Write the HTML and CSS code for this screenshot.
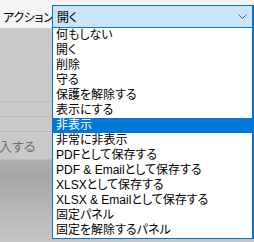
FILE: index.html
```html
<!DOCTYPE html>
<html lang="ja">
<head>
    <meta charset="UTF-8">
    <meta name="viewport" content="width=device-width, initial-scale=1.0">
    <title>アクション</title>
    <link rel="stylesheet" href="styles.css">
</head>
<body>
    <div class="form-row">
        <label class="field-label">アクション</label>
        <div class="select-wrap">
            <div class="select">
                <span>開く</span>
                <svg class="chevron" width="9" height="5" viewBox="0 0 9 5">
                    <polyline points="0.5,0.5 4.5,4.5 8.5,0.5" fill="none" stroke="#5f5f5f" stroke-width="1"/>
                </svg>
            </div>
            <ul class="options">
                <li>何もしない</li>
                <li>開く</li>
                <li>削除</li>
                <li>守る</li>
                <li>保護を解除する</li>
                <li>表示にする</li>
                <li class="active">非表示</li>
                <li>非常に非表示</li>
                <li>PDFとして保存する</li>
                <li>PDF &amp; Emailとして保存する</li>
                <li>XLSXとして保存する</li>
                <li>XLSX &amp; Emailとして保存する</li>
                <li>固定パネル</li>
                <li>固定を解除するパネル</li>
            </ul>
        </div>
    </div>

    <div class="panel">
        <div class="panel-row first"></div>
        <div class="panel-row short"></div>
        <div class="panel-row short"></div>
        <div class="panel-row input-row"><span class="hint">入する</span></div>
        <div class="panel-foot"></div>
    </div>
</body>
</html>
```

FILE: styles.css
```css
body {
    margin: 0;
    width: 254px;
    height: 242px;
    overflow: hidden;
    font-family: "Noto Sans CJK JP", "Noto Sans", sans-serif;
    font-feature-settings: "palt";
    font-size: 12px;
    color: #000;
    background-color: #c9c9c9;
}
.form-row {
    display: flex;
    align-items: flex-start;
    height: 28px;
    padding-top: 5px;
    box-sizing: border-box;
    background-color: #f4f4f4;
}
.field-label {
    width: 52px;
    padding-left: 3px;
    box-sizing: border-box;
    line-height: 23px;
    font-size: 12px;
    letter-spacing: -0.3px;
    white-space: nowrap;
}
.select-wrap {
    position: relative;
    width: 202px;
}
.select {
    display: flex;
    justify-content: space-between;
    align-items: center;
    height: 23px;
    box-sizing: border-box;
    padding: 0 5px 0 4px;
    border: 1px solid #0078d7;
    border-right-width: 2px;
    background-color: #cce4f7;
}
.chevron {
    display: block;
}
.options {
    position: absolute;
    top: 100%;
    left: 0;
    right: 0;
    margin: 0;
    padding: 0;
    list-style: none;
    background-color: #fff;
    border: 1px solid #0078d7;
    border-top: none;
    border-right-width: 2px;
    z-index: 2;
}
/* latin font first keeps the line box inside the 15px row */
.options li {
    height: 15px;
    line-height: 15px;
    padding-left: 3px;
    font-family: "Liberation Sans", "Noto Sans CJK JP", sans-serif;
    white-space: nowrap;
}
.options li.active {
    background-color: #0078d7;
    color: #fff;
}
.panel {
    display: flex;
    flex-direction: column;
    height: 214px;
}
.panel-row {
    border-bottom: 1px solid #bababa;
}
.panel-row.first {
    height: 73px;
}
.panel-row.short {
    height: 14px;
}
.panel-row.input-row {
    height: 27px;
    display: flex;
    align-items: center;
}
.hint {
    font-size: 13px;
    color: #6e6e6e;
    margin-left: -1px;
}
.panel-foot {
    flex: 1;
    background: linear-gradient(#afafaf, #a7a7a7 20%, #c6c6c6);
}
```
